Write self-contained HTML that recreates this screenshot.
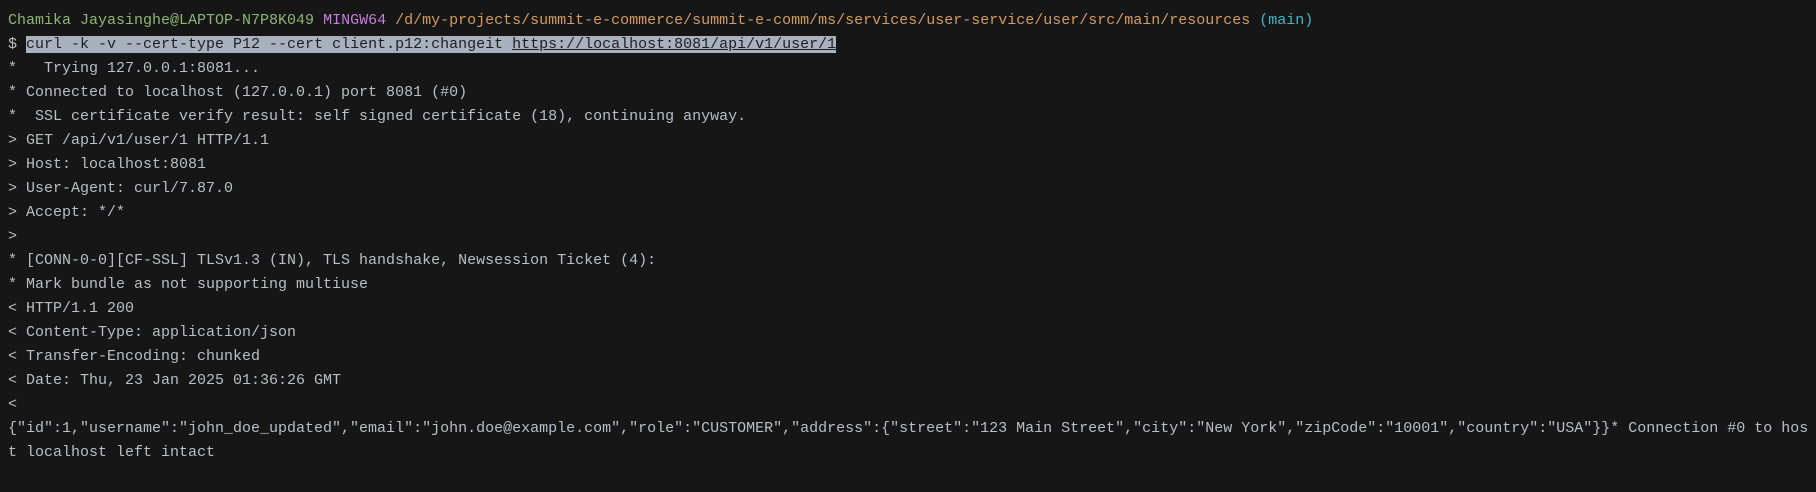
<!DOCTYPE html>
<html><head><meta charset="utf-8"><style>
html,body{margin:0;padding:0;background:#161616;width:1816px;height:492px;overflow:hidden}
pre{margin:0;padding:9px 0 0 8px;font-family:"Liberation Mono","DejaVu Sans Mono",monospace;font-size:15px;line-height:24px;color:#bcbec4;letter-spacing:0}
.g{color:#8fb573}.p{color:#c77dde}.o{color:#d39b62}.c{color:#3fb6c4}
.hl{background:#aab1be;color:#1e1f22}
.u{text-decoration:underline}
</style></head><body><pre><span class="g">Chamika Jayasinghe@LAPTOP-N7P8K049</span> <span class="p">MINGW64</span> <span class="o">/d/my-projects/summit-e-commerce/summit-e-comm/ms/services/user-service/user/src/main/resources</span> <span class="c">(main)</span>
$ <span class="hl">curl -k -v --cert-type P12 --cert client.p12:changeit <span class="u">https://localhost:8081/api/v1/user/1</span></span>
*   Trying 127.0.0.1:8081...
* Connected to localhost (127.0.0.1) port 8081 (#0)
*  SSL certificate verify result: self signed certificate (18), continuing anyway.
&gt; GET /api/v1/user/1 HTTP/1.1
&gt; Host: localhost:8081
&gt; User-Agent: curl/7.87.0
&gt; Accept: */*
&gt;
* [CONN-0-0][CF-SSL] TLSv1.3 (IN), TLS handshake, Newsession Ticket (4):
* Mark bundle as not supporting multiuse
&lt; HTTP/1.1 200
&lt; Content-Type: application/json
&lt; Transfer-Encoding: chunked
&lt; Date: Thu, 23 Jan 2025 01:36:26 GMT
&lt;
{"id":1,"username":"john_doe_updated","email":"john.doe@example.com","role":"CUSTOMER","address":{"street":"123 Main Street","city":"New York","zipCode":"10001","country":"USA"}}* Connection #0 to hos
t localhost left intact</pre></body></html>
